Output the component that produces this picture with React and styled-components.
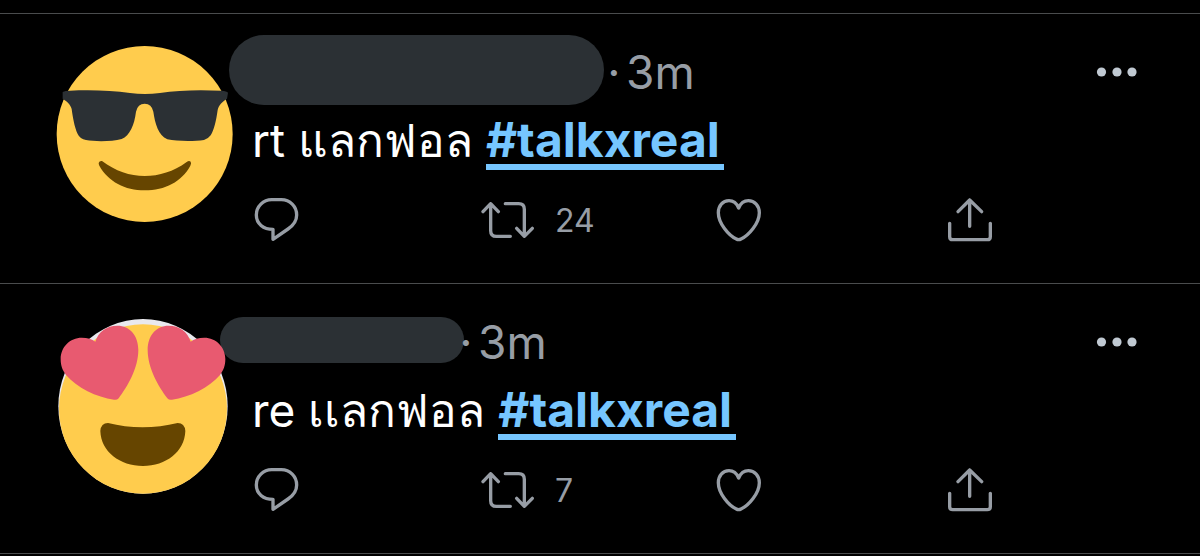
import * as React from 'react'
import styled, { createGlobalStyle } from 'styled-components'

const colors = {
  background: '#000000',
  line: '#4a4c4d',
  mask: '#2b3034',
  text: '#ffffff',
  muted: '#979da5',
  dots: '#c0c9d2',
  link: '#76c6ff',
  face: '#ffcc4d',
  mouth: '#664500',
  heart: '#e85a70'
}

const CoolFace = () => (
  <Avatar viewBox='48 45 534 534' role='img' aria-label='Smiling face with sunglasses'>
    <circle cx='314' cy='312' r='264' fill={colors.face} />
    <path
      fill={colors.mask}
      d='M68 186Q75 182 90 182C150 179 215 181 270 189Q314 195 360 189C415 180 480 179 545 182Q560 183 564 188L561 206C548 214 536 225 533 240C528 275 522 300 512 316Q504 327 492 330C460 335 410 334 382 328C355 316 345 280 340 245Q335 221 314 221Q293 221 288 245C283 285 270 316 245 327C215 335 165 335 138 330Q120 327 113 312C103 290 98 260 95 237C91 222 80 214 68 206Z'
    />
    <path
      fill={colors.mouth}
      d='M186 393Q178 392 176 399Q176 403 178 407C205 455 255 481 314 481C375 481 425 455 451 407Q455 400 452 395Q447 391 440 396C400 425 358 438 314 438C270 438 226 423 186 393Z'
    />
  </Avatar>
)

const heartEye = 'M166 110C175 80 200 62 232 62C270 62 295 92 295 135C295 190 262 245 236 280Q230 286 222 284C170 277 110 248 78 210C66 194 62 180 62 162C62 126 90 98 125 98C143 98 156 102 166 110Z'

const LoveFace = () => (
  <Avatar viewBox='48 30 534 534' role='img' aria-label='Smiling face with heart eyes'>
    <ellipse cx='309' cy='304' rx='254' ry='262' fill='#e9e9ee' />
    <ellipse cx='309' cy='312' rx='252' ry='254' fill={colors.face} />
    <path fill={colors.heart} d={heartEye} />
    <path fill={colors.heart} d={heartEye} transform='translate(618 0) scale(-1 1)' />
    <path
      fill={colors.mouth}
      d='M204 354Q183 354 181 378C183 440 240 483 309 483C378 483 434 440 436 378Q434 354 413 354C345 371 270 371 204 354Z'
    />
  </Avatar>
)

const posts = [
  {
    id: 1,
    Face: CoolFace,
    mask: { width: 375, height: 70, left: 21, right: 0 },
    text: 'rt แลกฟอล',
    retweets: 24
  },
  {
    id: 2,
    Face: LoveFace,
    mask: { width: 244, height: 46, left: 30, right: 8 },
    text: 're เเลกฟอล',
    retweets: 7
  }
]

const Post = ({ post }) => {
  const { Face } = post
  return (
    <Root>
      <Face />
      <Content>
        <Header>
          <Mask $mask={post.mask} />
          <Dot>·</Dot>
          <Time>3m</Time>
          <MoreButton type='button' aria-label='More'>
            <svg width='42' height='12' viewBox='0 0 42 12' fill={colors.dots}>
              <circle cx='5.5' cy='6' r='4.6' />
              <circle cx='21' cy='6' r='4.6' />
              <circle cx='36' cy='6' r='4.6' />
            </svg>
          </MoreButton>
        </Header>
        <Message>
          {post.text} <Hashtag href='#talkxreal'>#talkxreal</Hashtag>
        </Message>
        <Actions>
          <Action type='button' aria-label='Reply'>
            <Icon viewBox='30 42 156 156'>
              <path d='M95 59H124C150 59 170 79 170 105C170 127 156 139 144 147L99 178V148C70 148 49 131 49 105C49 79 70 59 95 59Z' />
            </Icon>
          </Action>
          <Action type='button' aria-label={`Retweet ${post.retweets}`}>
            <Icon viewBox='723 42 156 156'>
              <path d='M729 95L752 71L775 95M752 71V152Q752 169 769 169H811M796 71H836Q853 71 853 88V169M830 145L853 169L877 145' />
            </Icon>
            {post.retweets}
          </Action>
          <Action type='button' aria-label='Like'>
            <Icon viewBox='36 42 156 156'>
              <path d='M116 84C110 70 100 62 87 62C68 62 55 77 55 98C55 130 86 166 109 177Q116 181 123 177C146 166 178 130 178 98C178 77 164 62 145 62C132 62 122 70 116 84Z' />
            </Icon>
          </Action>
          <Action type='button' aria-label='Share'>
            <Icon viewBox='729 42 156 156'>
              <path d='M774 95L809 60L845 95M809 60V139M749 130V170Q749 179 758 179H862Q871 179 871 170V130' />
            </Icon>
          </Action>
        </Actions>
      </Content>
    </Root>
  )
}

const App = () => (
  <>
    <GlobalStyle />
    <Timeline>
      {posts.map(post => <Post key={post.id} post={post} />)}
    </Timeline>
  </>
)

const GlobalStyle = createGlobalStyle`
  * {
    box-sizing: border-box;
  }
  body {
    margin: 0;
    background: ${colors.background};
    color: ${colors.text};
    font-family: Inter, 'Noto Sans', sans-serif;
  }
  button {
    padding: 0;
    border: 0;
    background: none;
    font: inherit;
    color: inherit;
    cursor: pointer;
  }
`

const Timeline = styled.main`
  padding-top: 13px;
`

const Root = styled.article`
  display: flex;
  gap: 16px;
  padding: 20px 62px 37px 56px;
  border-top: 1px solid ${colors.line};
  &:last-child {
    border-bottom: 1px solid ${colors.line};
  }
`

const Avatar = styled.svg`
  position: relative;
  z-index: 1;
  flex: none;
  width: 178px;
  height: 178px;
  margin-top: 11px;
  overflow: visible;
`

const Content = styled.div`
  flex: 1;
  min-width: 0;
`

const Header = styled.header`
  display: flex;
  align-items: center;
  height: 76px;
  font-size: 46px;
  color: ${colors.muted};
`

const Mask = styled.span`
  width: ${({ $mask }) => $mask.width}px;
  height: ${({ $mask }) => $mask.height}px;
  margin: 0 -${({ $mask }) => $mask.right}px 4px -${({ $mask }) => $mask.left}px;
  border-radius: 36px;
  background: ${colors.mask};
`

const Dot = styled.span`
  width: 20px;
  text-align: center;
`

const Time = styled.time`
  flex: 1;
  padding-left: 2px;
`

const MoreButton = styled.button`
  display: flex;
`

const Message = styled.p`
  margin: 0 0 24px;
  padding-left: 2px;
  height: 60px;
  font-size: 46px;
  line-height: 60px;
  white-space: nowrap;
`

const Hashtag = styled.a`
  display: inline-block;
  padding-right: 4px;
  border-bottom: 6px solid ${colors.link};
  color: ${colors.link};
  font-size: 48px;
  font-weight: 700;
  line-height: 48px;
  text-decoration: none;
`

const Actions = styled.div`
  display: grid;
  grid-template-columns: repeat(3, 26%) 1fr;
`

const Action = styled.button`
  display: flex;
  align-items: center;
  gap: 22px;
  height: 52px;
  font-size: 32px;
  color: ${colors.muted};
`

const Icon = styled.svg`
  flex: none;
  width: 52px;
  height: 52px;
  overflow: visible;
  fill: none;
  stroke: currentColor;
  stroke-width: 10;
  stroke-linecap: round;
  stroke-linejoin: round;
`

export default App
